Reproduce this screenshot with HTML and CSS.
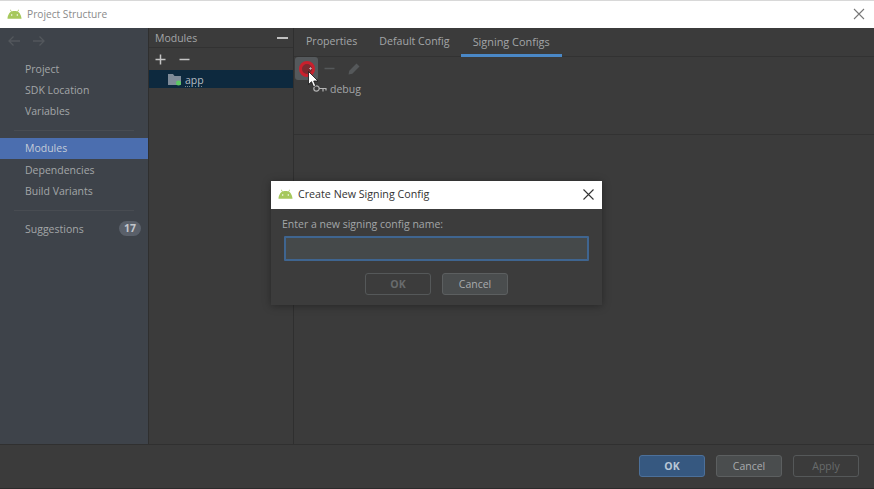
FILE: index.html
```html
<!DOCTYPE html>
<html lang="en">
<head>
<meta charset="utf-8">
<title>Project Structure</title>
<link rel="stylesheet" href="styles.css">
</head>
<body>
<svg class="defs" width="0" height="0">
  <symbol id="droid" viewBox="0 0 16 10">
    <path d="M0.5 10C0.8 6 3 3 4.3 2.6L3.2 .6 3.8 .3 5 2.2C6.8 1.5 9.2 1.5 11 2.2L12.2 .3 12.8 .6 11.7 2.6C13 3 15.2 6 15.500 10Z" fill="#a6c85c"/>
    <circle cx="5" cy="6" r=".8" fill="#fff"/><circle cx="11" cy="6" r=".8" fill="#fff"/>
  </symbol>
</svg>
<div class="window">
  <header class="titlebar">
    <div class="title-left">
      <svg class="droid" width="15" height="10"><use href="#droid"/></svg>
      <span class="title-muted">Project Structure</span>
    </div>
    <svg class="close" width="12" height="12" viewBox="0 0 12 12"><path d="M1 1l10 10M11 1L1 11" stroke="#777" stroke-width="1.1" fill="none"/></svg>
  </header>
  <div class="main">
    <nav class="sidebar">
      <div class="arrows">
        <svg width="14" height="12" viewBox="0 0 14 12"><path d="M13 6H2M6.500 1.500L2 6l4.500 4.500" stroke="#53575c" stroke-width="1.300" fill="none"/></svg>
        <svg width="14" height="12" viewBox="0 0 14 12"><path d="M1 6h11M7.500 1.500L12 6l-4.500 4.500" stroke="#53575c" stroke-width="1.300" fill="none"/></svg>
      </div>
      <ul class="nav-group g1">
        <li>Project</li><li>SDK Location</li><li>Variables</li>
      </ul>
      <div class="nav-sep"></div>
      <ul class="nav-group g2">
        <li class="active">Modules</li><li>Dependencies</li><li>Build Variants</li>
      </ul>
      <div class="nav-sep"></div>
      <div class="suggest"><span>Suggestions</span><span class="badge">17</span></div>
    </nav>
    <section class="modules">
      <div class="mod-head"><span>Modules</span><span class="dash"></span></div>
      <div class="mod-tools">
        <svg width="11" height="11" viewBox="0 0 11 11"><path d="M5.500 .5v10M.5 5.500h10" stroke="#c4c4c4" stroke-width="1.500"/></svg>
        <svg width="11" height="11" viewBox="0 0 11 11"><path d="M.5 5.500h10" stroke="#c4c4c4" stroke-width="1.500"/></svg>
      </div>
      <div class="mod-row">
        <svg width="14" height="13" viewBox="0 0 14 13"><path d="M0 1h5l1.500 2H13v9H0z" fill="#7f8b98"/><circle cx="10.500" cy="10" r="2.500" fill="#5cc862"/></svg>
        <span class="app-name">app</span>
      </div>
    </section>
    <section class="content">
      <div class="tabs">
        <span class="tab">Properties</span>
        <span class="tab">Default Config</span>
        <span class="tab selected">Signing Configs</span>
      </div>
      <div class="config-list">
        <div class="tools">
          <span class="hot"><span class="ring"><svg width="7" height="7" viewBox="0 0 7 7"><path d="M3.500 0v7M0 3.500h7" stroke="#ccc" stroke-width="1.500"/></svg></span></span>
          <svg width="11" height="11" viewBox="0 0 11 11"><path d="M.5 5.500h10" stroke="#55585a" stroke-width="1.500"/></svg>
          <svg width="13" height="13" viewBox="0 0 13 13"><path d="M.5 12.500l.8-3.800 7.200-7.200 3 3-7.200 7.200z" fill="#55585a"/></svg>
        </div>
        <div class="key-row">
          <svg width="14" height="10" viewBox="0 0 14 10"><circle cx="3.500" cy="4.500" r="2.700" fill="none" stroke="#b5b5b5" stroke-width="1.200"/><path d="M6 4.500h7.500M10 4.500v3M13 4.500v2" stroke="#b5b5b5" stroke-width="1.200" fill="none"/></svg>
          <span>debug</span>
        </div>
      </div>
    </section>
  </div>
  <footer class="footer">
    <button class="btn primary">OK</button>
    <button class="btn">Cancel</button>
    <button class="btn off">Apply</button>
  </footer>
</div>

<div class="dialog">
  <div class="dlg-title">
    <div class="title-left">
      <svg class="droid" width="15" height="10"><use href="#droid"/></svg>
      <span class="dlg-name">Create New Signing Config</span>
    </div>
    <svg width="11" height="11" viewBox="0 0 11 11"><path d="M.5 .5l10 10M10.500 .5l-10 10" stroke="#333" stroke-width="1.100" fill="none"/></svg>
  </div>
  <div class="dlg-body">
    <label class="dlg-label">Enter a new signing config name:</label>
    <div class="dlg-input"></div>
    <div class="dlg-actions">
      <button class="btn off small">OK</button>
      <button class="btn small">Cancel</button>
    </div>
  </div>
</div>

<svg class="cursor" width="11" height="17" viewBox="0 0 11 17"><path d="M.5 .5v13l3-2.800 2 5 2.200-1-2-4.700h4.300z" fill="#fff" stroke="#111" stroke-width=".8"/></svg>
</body>
</html>
```

FILE: styles.css
```css
* { box-sizing: border-box; }
html, body { margin: 0; height: 100%; }
body {
  width: 874px; height: 489px; overflow: hidden; position: relative;
  font-family: "Open Sans", "Noto Sans", sans-serif; font-size: 10.500px; color: #a3a6a8;
  background: #2c2c2c;
}
.defs { position: absolute; }
ul { list-style: none; margin: 0; padding: 0; }
.window { display: flex; flex-direction: column; height: 488px; }
.titlebar {
  height: 28px; padding: 0 9px 2px 7px; background: #fff;
  border-top: 1px solid #d8d8d8;
  display: flex; align-items: center; justify-content: space-between;
  flex: none;
}
.title-left { display: flex; align-items: center; gap: 5px; }
.title-muted { color: #8a8a8a; font-size: 10.200px; }
.main { flex: 1; display: flex; min-height: 0; }
.sidebar { width: 149px; flex: none; background: #3e434a; border-right: 1px solid #2f2f2f; }
.arrows { height: 26px; padding: 7px 0 0 7px; display: flex; gap: 11px; }
.nav-group li { height: 21px; line-height: 20px; padding-left: 25px; }
.g1 { margin-top: 5px; }
.nav-group .active { background: #4b6eaf; color: #c4ccd8; margin-bottom: 1px; }
.nav-sep { height: 1px; background: #484c52; margin: 8px 14px 7px 14px; }
.suggest { display: flex; justify-content: space-between; align-items: center; padding: 0 7px 0 25px; height: 21px; }
.badge { background: #5a606a; color: #c2c6ca; font-weight: 700; border-radius: 8px; width: 22px; height: 15px; line-height: 15px; text-align: center; }
.modules { width: 145px; flex: none; background: #3b3b3b; border-right: 1px solid #2f2f2f; }
.mod-head { height: 20px; padding: 0 5px 0 6px; display: flex; align-items: center; justify-content: space-between; border-bottom: 1px solid #323232; }
.dash { width: 11px; height: 2px; background: #c0c0c0; }
.mod-tools { height: 22px; padding: 0 6px; display: flex; align-items: center; gap: 13px; }
.mod-row { height: 18px; background: #0d293e; display: flex; align-items: center; gap: 3px; padding-left: 19px; color: #b5bcc2; }
.app-name { padding-top: 2px; text-decoration: underline dotted #7d8890; text-underline-offset: 2px; }
.content { flex: 1; min-width: 0; display: flex; flex-direction: column; background: #3b3b3b; }
.tabs { height: 29px; display: flex; padding-left: 1px; border-bottom: 1px solid #323232; flex: none; font-size: 10.600px; }
.tab { padding: 0 11px; line-height: 27px; height: 29px; }
.tab.selected { border-bottom: 3px solid #4a88c7; padding: 0 12px; font-size: 10.900px; }
.config-list { height: 78px; border-bottom: 1px solid #323232; flex: none; padding-left: 1px; }
.tools { display: flex; align-items: center; height: 23px; gap: 6px; }
.tools svg:last-child { margin-left: 7px; margin-top: -1px; }
.hot { width: 23px; height: 23px; background: #55595c; border-radius: 3px; display: flex; align-items: center; justify-content: center; }
.ring { width: 16px; height: 16px; border-radius: 50%; background: #7a2b30; border: 3px solid #c9202d; display: flex; align-items: center; justify-content: center; }
.key-row { display: flex; align-items: center; gap: 3px; padding-left: 18px; height: 18px; }
.footer {
  height: 44px; flex: none; border-top: 1px solid #303030; background: #3b3b3b;
  display: flex; justify-content: flex-end; align-items: center; gap: 11px; padding: 0 15px 2px 0;
}
.btn {
  width: 66px; height: 22px; padding: 0; font: inherit; border-radius: 3px;
  background: #4a4d4e; color: #a8abad; border: 1px solid #5c5f60;
}
.btn.primary { background: #365880; border-color: #4c709a; color: #b9c7d6; font-weight: 700; }
.btn.off { background: transparent; border-color: #555859; color: #686b6c; }
.dialog {
  position: absolute; left: 271px; top: 181px; width: 331px; height: 124px;
  background: #3c3c3c; box-shadow: 0 1px 8px rgba(0,0,0,.35);
}
.dlg-title { height: 28px; background: #fff; color: #333; padding: 0 8px 2px 7px; display: flex; align-items: center; justify-content: space-between; }
.dlg-name { font-size: 10.700px; }
.dlg-body { padding: 8px 13px 0 11px; }
.dlg-label { display: block; line-height: 14px; }
.dlg-input { height: 25px; margin: 5px 0 0 2px; background: #45494a; border: 2px solid #3f6590; border-radius: 1px; }
.dlg-actions { display: flex; justify-content: center; gap: 11px; margin: 12px 0 0; padding-left: 2px; }
.small.off { font-weight: 700; }
.cursor { position: absolute; left: 308px; top: 71px; }
```
